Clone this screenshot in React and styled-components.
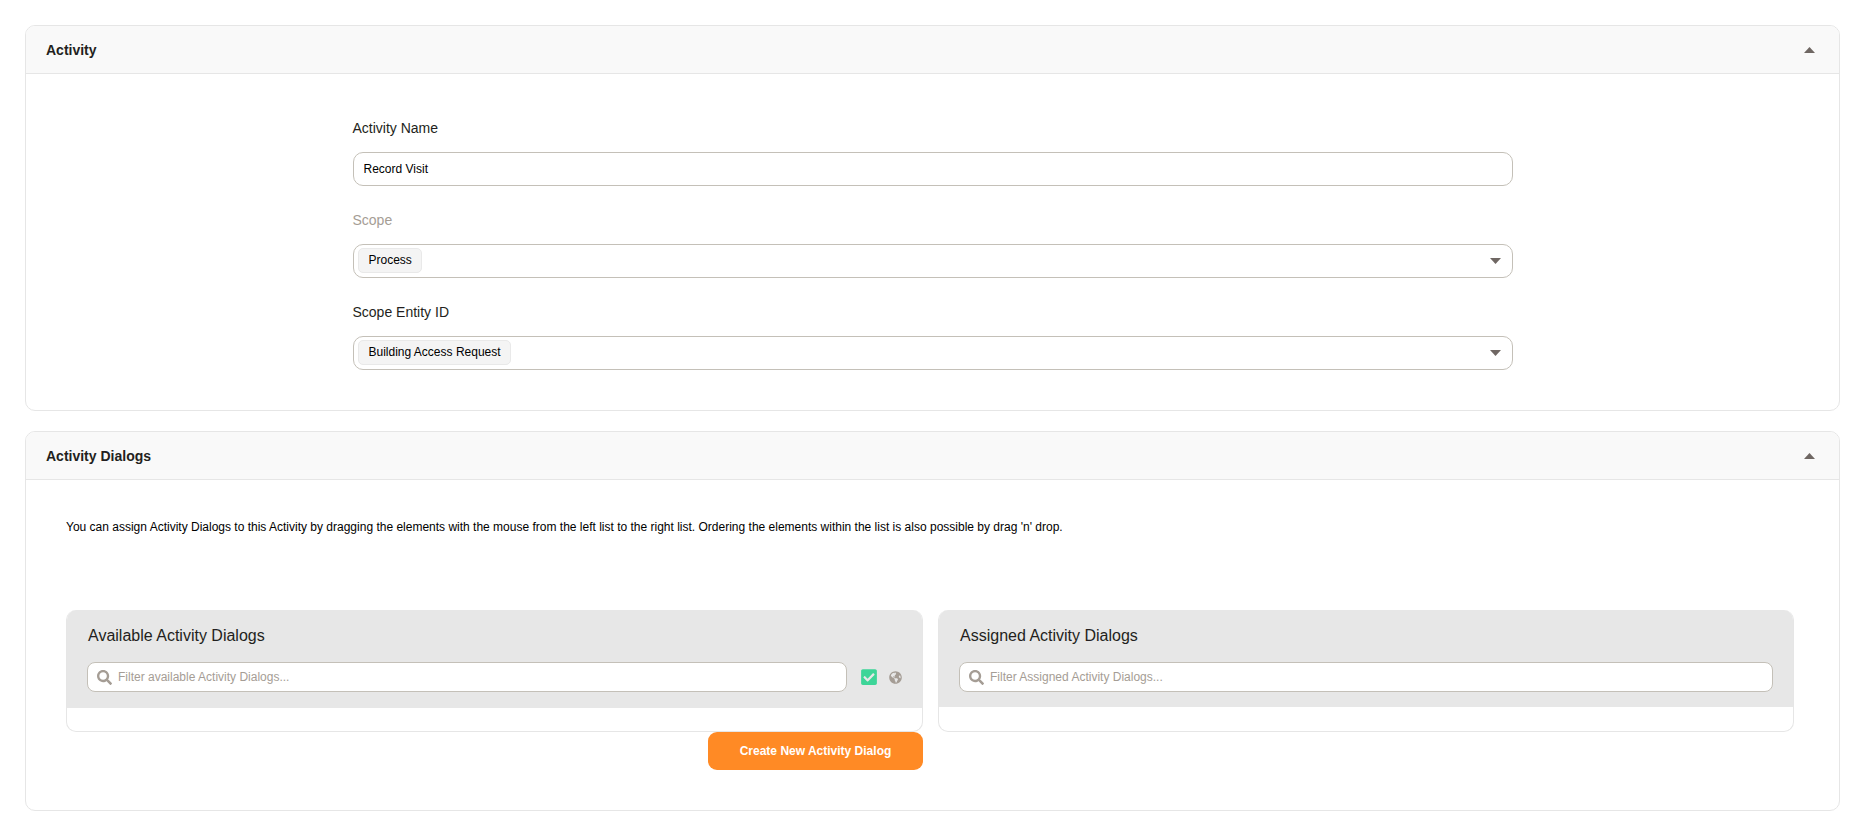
import React from 'react';
import styled, { createGlobalStyle } from 'styled-components';
import { FaSearch, FaCheckSquare, FaGlobeAmericas } from 'react-icons/fa';

const Global = createGlobalStyle`
  * { box-sizing: border-box; }
  html, body { margin: 0; background: #fff; }
  body { font-family: "Liberation Sans", Arial, sans-serif; font-size: 12px; color: #000; }
`;

const Page = styled.div`
  padding: 25px 13px 25px 25px;
  display: flex;
  flex-direction: column;
  gap: 20px;
`;
const Card = styled.section`
  border: 1px solid #e6e6e6;
  border-radius: 10px;
  overflow: hidden;
  background: #fff;
`;
const CardHeader = styled.header`
  height: 47px;
  padding: 0 24px 0 20px;
  display: flex;
  align-items: center;
  justify-content: space-between;
  background: #f9f9f9;
  border-bottom: 1px solid #e6e6e6;
  box-sizing: content-box;
`;
const CardTitle = styled.h2`
  margin: 0;
  font-size: 14px;
  font-weight: 700;
  color: #231f20;
`;
const Caret = styled.svg`
  display: block;
  width: 11px;
  height: 6px;
  fill: #6f6763;
`;
const FormBody = styled.div`
  width: 1160px;
  margin: 0 auto;
  padding: 44px 0 40px;
  display: flex;
  flex-direction: column;
  gap: 24px;
`;
const Field = styled.div`
  display: flex;
  flex-direction: column;
  gap: 14px;
`;
const Label = styled.label`
  font-size: 14px;
  line-height: 20px;
  color: ${p => (p.$muted ? '#a59d95' : '#231f20')};
`;
const TextInput = styled.input`
  height: 34px;
  width: 100%;
  padding: 0 10px;
  border: 1px solid #c4c0b8;
  border-radius: 10px;
  outline: none;
  background: #fff;
  font: 12px "Liberation Sans", Arial, sans-serif;
  color: #000;
`;
const Select = styled.div`
  height: 34px;
  padding: 3px 11px 0 4px;
  display: flex;
  align-items: flex-start;
  justify-content: space-between;
  border: 1px solid #c4c0b8;
  border-radius: 10px;
  svg { margin-top: 10px; }
`;
const Chip = styled.span`
  height: 25px;
  padding: 0 9px 2px 10px;
  display: inline-flex;
  align-items: center;
  border: 1px solid #e9e9e9;
  border-radius: 5px;
  background: #f4f4f4;
  font-size: 12px;
  color: #000;
`;
const DialogsBody = styled.div`
  padding: 39px 45px 40px 40px;
`;
const Intro = styled.p`
  margin: 0 0 75px;
  font-size: 12px;
  line-height: 16px;
  color: #000;
`;
const Lists = styled.div`
  display: grid;
  grid-template-columns: 857px 856px;
  column-gap: 15px;
`;
const Panel = styled.div`
  height: 122px;
  display: flex;
  flex-direction: column;
  border: 1px solid #e6e6e6;
  border-top: 0;
  border-radius: 10px;
  overflow: hidden;
`;
const PanelHead = styled.div`
  height: ${p => p.$height}px;
  margin: 0 -1px;
  padding: 16px 21px 0;
  background: #e7e7e7;
`;
const PanelTitle = styled.h3`
  margin: 0 0 16px 1px;
  font-size: 16px;
  line-height: 20px;
  font-weight: 400;
  color: #231f20;
`;
const FilterRow = styled.div`
  display: flex;
  align-items: center;
`;
const FilterBox = styled.div`
  flex: 1;
  height: 30px;
  padding: 0 9px;
  display: flex;
  align-items: center;
  gap: 6px;
  border: 1px solid #c4c0b8;
  border-radius: 8px;
  background: #fff;
  color: #a59d95;
  svg { width: 15px; height: 15px; flex: none; }
`;
const FilterInput = styled.input`
  flex: 1;
  min-width: 0;
  padding: 0;
  border: 0;
  outline: none;
  background: transparent;
  font: 12px "Liberation Sans", Arial, sans-serif;
  color: #000;
  &::placeholder { color: #a59d95; opacity: 1; }
`;
const Toggles = styled.div`
  margin-left: 13px;
  width: 42px;
  display: flex;
  align-items: center;
  gap: 11px;
`;
const CheckIcon = styled(FaCheckSquare)`
  width: 18px;
  height: 18px;
  color: #3dd598;
  flex: none;
`;
const GlobeIcon = styled(FaGlobeAmericas)`
  width: 13px;
  height: 13px;
  color: #a59d95;
  flex: none;
`;
const ActionRow = styled.div`
  width: 857px;
  display: flex;
  justify-content: flex-end;
`;
const PrimaryButton = styled.button`
  width: 215px;
  height: 38px;
  border: 0;
  border-radius: 9px;
  background: #ff8a25;
  color: #fff;
  font: 700 12px "Liberation Sans", Arial, sans-serif;
`;

const CaretUp = () => (
  <Caret viewBox="0 0 11 6"><polygon points="5.5,0 11,6 0,6" /></Caret>
);
const CaretDown = () => (
  <Caret viewBox="0 0 11 6"><polygon points="0,0 11,0 5.5,6" /></Caret>
);

export default function App() {
  return (
    <>
      <Global />
      <Page>
        <Card>
          <CardHeader>
            <CardTitle>Activity</CardTitle>
            <CaretUp />
          </CardHeader>
          <FormBody>
            <Field>
              <Label>Activity Name</Label>
              <TextInput defaultValue="Record Visit" />
            </Field>
            <Field>
              <Label $muted>Scope</Label>
              <Select>
                <Chip>Process</Chip>
                <CaretDown />
              </Select>
            </Field>
            <Field>
              <Label>Scope Entity ID</Label>
              <Select>
                <Chip>Building Access Request</Chip>
                <CaretDown />
              </Select>
            </Field>
          </FormBody>
        </Card>
        <Card>
          <CardHeader>
            <CardTitle>Activity Dialogs</CardTitle>
            <CaretUp />
          </CardHeader>
          <DialogsBody>
            <Intro>
              You can assign Activity Dialogs to this Activity by dragging the elements with the mouse from the left list to the right list. Ordering the elements within the list is also possible by drag 'n' drop.
            </Intro>
            <Lists>
              <Panel>
                <PanelHead $height={98}>
                  <PanelTitle>Available Activity Dialogs</PanelTitle>
                  <FilterRow>
                    <FilterBox>
                      <FaSearch />
                      <FilterInput placeholder="Filter available Activity Dialogs..." />
                    </FilterBox>
                    <Toggles>
                      <CheckIcon />
                      <GlobeIcon />
                    </Toggles>
                  </FilterRow>
                </PanelHead>
              </Panel>
              <Panel>
                <PanelHead $height={97}>
                  <PanelTitle>Assigned Activity Dialogs</PanelTitle>
                  <FilterRow>
                    <FilterBox>
                      <FaSearch />
                      <FilterInput placeholder="Filter Assigned Activity Dialogs..." />
                    </FilterBox>
                  </FilterRow>
                </PanelHead>
              </Panel>
            </Lists>
            <ActionRow>
              <PrimaryButton>Create New Activity Dialog</PrimaryButton>
            </ActionRow>
          </DialogsBody>
        </Card>
      </Page>
    </>
  );
}
